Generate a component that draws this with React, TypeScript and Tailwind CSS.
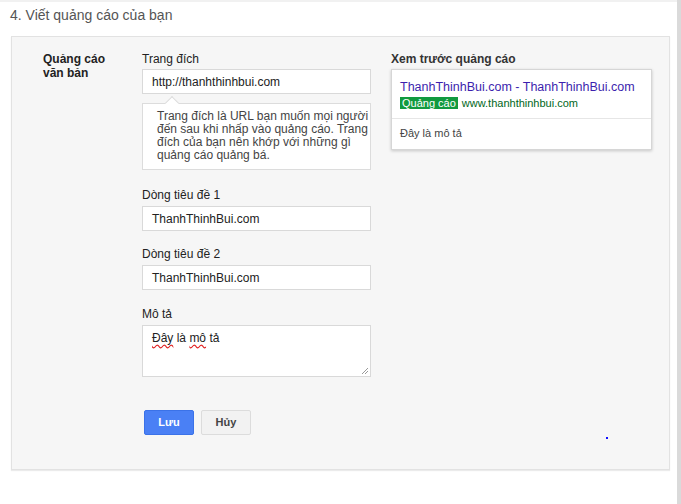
import React from 'react';

const font = { fontFamily: '"Liberation Sans", Arial, sans-serif' };

function Field({ label, value, className = '' }: { label: string; value: string; className?: string }) {
  return (
    <div className={className}>
      <div className="mb-[4px] text-[12px] leading-[14px] text-[#222]">{label}</div>
      <div className="flex h-[25px] items-center border border-[#d9d9d9] bg-white px-[9px] text-[12px] text-[#222]">
        {value}
      </div>
    </div>
  );
}

export default function App() {
  return (
    <div className="flex h-[504px] w-[681px] overflow-hidden bg-white" style={font}>
      <div className="relative flex-1 border-t-2 border-[#f1f1f1]">
        <h2 className="pl-[10px] pt-[5px] text-[14px] leading-[17px] text-[#555]">4. Viết quảng cáo của bạn</h2>

        <div className="relative ml-[11px] mt-[12px] flex h-[434px] w-[659px] border border-[#e2e2e2] bg-[#f6f6f6] pl-[31px] pt-[15px] shadow-[0_1px_1px_rgba(0,0,0,0.08)]">
          <div className="w-[99px] text-[12px] font-bold leading-[14px] text-[#222]">
            Quảng cáo
            <br />
            văn bản
          </div>

          <div className="w-[229px]">
            <div className="mb-[3px] text-[12px] leading-[14px] text-[#222]">Trang đích</div>
            <div className="flex h-[25px] items-center border border-[#d9d9d9] bg-white px-[9px] text-[12px] text-[#222]">
              http://thanhthinhbui.com
            </div>

            <div className="relative mt-[9px] h-[67px] border border-[#dcdcdc] bg-white pl-[14px] pt-[6px] text-[12px] leading-[13px] text-[#444] whitespace-nowrap">
              <span className="absolute left-[24px] top-[-6px] h-[10px] w-[10px] rotate-45 border-l border-t border-[#dcdcdc] bg-white" />
              <div className="relative">
                Trang đích là URL bạn muốn mọi người
                <br />
                đến sau khi nhấp vào quảng cáo. Trang
                <br />
                đích của bạn nên khớp với những gì
                <br />
                quảng cáo quảng bá.
              </div>
            </div>

            <Field label="Dòng tiêu đề 1" value="ThanhThinhBui.com" className="mt-[18px]" />
            <Field label="Dòng tiêu đề 2" value="ThanhThinhBui.com" className="mt-[16px]" />

            <div className="mt-[17px]">
              <div className="mb-[4px] text-[12px] leading-[14px] text-[#222]">Mô tả</div>
              <div className="relative h-[52px] border border-[#d9d9d9] bg-white px-[9px] pt-[5px] text-[12px] leading-[14px] text-[#222]">
                <span className="underline decoration-wavy decoration-[#e02020] underline-offset-2">Đây</span> là{' '}
                <span className="underline decoration-wavy decoration-[#e02020] underline-offset-2">mô</span> tả
                <svg className="absolute bottom-[1px] right-[1px]" width="8" height="8" viewBox="0 0 8 8">
                  <path d="M7 1 L1 7 M7 4 L4 7" stroke="#999" strokeWidth="1" />
                </svg>
              </div>
            </div>

            <div className="ml-[2px] mt-[33px] flex gap-[7px]">
              <button
                type="button"
                className="h-[25px] w-[50px] rounded-[2px] border border-[#3b72e8] bg-[#4a80f5] text-[11px] font-bold text-white"
              >
                Lưu
              </button>
              <button
                type="button"
                className="h-[25px] w-[50px] rounded-[2px] border border-[#dcdcdc] bg-[#f2f2f2] text-[11px] font-bold text-[#444]"
              >
                Hủy
              </button>
            </div>
          </div>

          <div className="ml-[20px] w-[261px]">
            <div className="mb-[3px] text-[12px] font-bold leading-[14px] text-[#333]">Xem trước quảng cáo</div>
            <div className="border border-[#d6d6d6] bg-white shadow-[0_1px_3px_rgba(0,0,0,0.2)]">
              <div className="border-b border-[#e6e6e6] px-[8px] pb-[8px] pt-[9px]">
                <div className="whitespace-nowrap text-[12.5px] leading-[16px] text-[#3d1fae]">
                  ThanhThinhBui.com - ThanhThinhBui.com
                </div>
                <div className="mt-[1px] flex items-center gap-[4px] whitespace-nowrap text-[11px] leading-[14px]">
                  <span className="bg-[#119a3f] px-[2px] leading-[12px] text-white">Quảng cáo</span>
                  <span className="text-[#006621]">www.thanhthinhbui.com</span>
                </div>
              </div>
              <div className="px-[8px] pb-[9px] pt-[7px] text-[11px] leading-[14px] text-[#444]">Đây là mô tả</div>
            </div>
          </div>

          <span className="absolute left-[594px] top-[400px] h-[2px] w-[2px] bg-[#1010ff]" />
        </div>
      </div>
      <div className="w-[4px] bg-[#dadada]" />
    </div>
  );
}
